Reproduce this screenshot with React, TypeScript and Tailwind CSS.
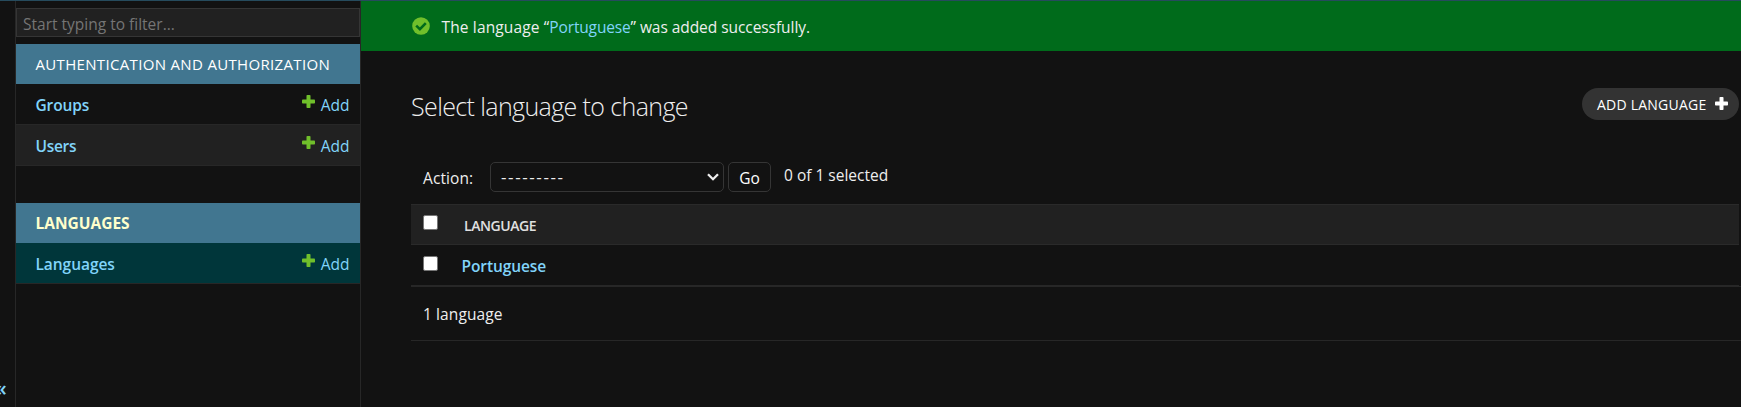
import type { ReactNode } from "react";

function PlusIcon({ className }: { className: string }) {
  return (
    <svg viewBox="0 0 13 13" className={className} fill="currentColor" aria-hidden="true">
      <rect x="4.5" y="0" width="4" height="13" rx="0.8" />
      <rect x="0" y="4.5" width="13" height="4" rx="0.8" />
    </svg>
  );
}

function CheckIcon() {
  return (
    <svg viewBox="0 0 18 18" className="h-[18px] w-[18px] shrink-0" aria-hidden="true">
      <circle cx="9" cy="9" r="8.8" fill="#70bf2b" />
      <path d="M4.2 8.6 L7.9 12.1 L13.8 6.1" fill="none" stroke="#006b1b" strokeWidth="2.6" />
    </svg>
  );
}

function ModelRow({ name, tracking, className }: { name: string; tracking: string; className: string }) {
  return (
    <li className={`flex h-[41px] items-center border-b border-[#272727] pl-[19.5px] pr-[10.5px] pt-[2px] text-[#81d4fa] ${className}`}>
      <a className={`font-semibold ${tracking}`}>{name}</a>
      <a className="ml-auto flex items-center">
        <PlusIcon className="mb-[7px] mr-[6px] h-[13px] w-[13px] text-[#70bf2b]" />
        Add
      </a>
    </li>
  );
}

function Caption({ children, className }: { children: ReactNode; className: string }) {
  return (
    <h2 className={`flex h-10 items-center whitespace-nowrap bg-[#417690] pl-[19.5px] uppercase ${className}`}>{children}</h2>
  );
}

function Checkbox() {
  return <span className="h-[15px] w-[15px] shrink-0 rounded-[2px] border border-[#767676] bg-white" />;
}

export default function App() {
  return (
    <div className="h-[407px] w-[1741px] overflow-hidden border-t border-[#264b5d] bg-[#121212] font-['Open_Sans',sans-serif] text-[15.5px] leading-5 text-[#eeeeee]">
      <div className="flex h-full">
        <div className="flex w-[15px] flex-col justify-end overflow-hidden pb-[7px]">
          <span className="-ml-[5px] text-[21px] font-semibold leading-6 text-[#81d4fa]">«</span>
        </div>

        <nav className="w-[346px] shrink-0 border-x border-[#272727] pt-[7px]">
          <div className="h-[29px] border border-[#353535] bg-[#212121] pl-[6px] pt-[5px] text-[#757575]">
            Start typing to filter…
          </div>
          <section className="mt-[7px]">
            <Caption className="text-[15px] tracking-[0.33px] text-white">Authentication and Authorization</Caption>
            <ul>
              <ModelRow name="Groups" tracking="tracking-[-0.15px]" className="" />
              <ModelRow name="Users" tracking="tracking-[-0.3px]" className="bg-[#212121]" />
            </ul>
          </section>
          <section className="mt-[37px]">
            <Caption className="font-bold text-[#ffffcc]">Languages</Caption>
            <ul>
              <ModelRow name="Languages" tracking="tracking-[-0.05px]" className="bg-[#00363a]" />
            </ul>
          </section>
        </nav>

        <main className="min-w-0 flex-1">
          <div className="flex h-[50px] items-center bg-[#006b1b] pl-[51px]">
            <CheckIcon />
            <p className="ml-[11.5px] whitespace-nowrap pt-[2px]">
              <span className="tracking-[0.14px]">The language “</span>
              <a className="tracking-[-0.15px] text-[#81d4fa]">Portuguese</a>
              <span className="tracking-[-0.06px]">” was added successfully.</span>
            </p>
          </div>

          <div className="pl-[50px]">
            <div className="flex items-start pr-[2px] pt-[37px]">
              <h1 className="pt-[3px] text-[25px] font-light leading-[30px] tracking-[-0.61px]">Select language to change</h1>
              <a className="ml-auto flex h-8 w-[157px] items-center rounded-full bg-[#333333] pl-[15px] text-[14px] tracking-[0.23px] text-white">
                <span className="pt-[1px]">ADD LANGUAGE</span>
                <PlusIcon className="mb-[1px] ml-[9px] h-[13px] w-[13px]" />
              </a>
            </div>

            <div className="mt-[41px] flex h-[30px] pl-3">
              <span className="w-[67px] pt-[6px] tracking-[0.1px]">Action:</span>
              <div className="flex w-[234px] items-center rounded-[5px] border border-[#353535] pl-[10px] pr-[4px]">
                <span className="text-[17px] tracking-[1.6px]">---------</span>
                <svg viewBox="0 0 12 8" className="ml-auto h-2 w-3" fill="none" stroke="currentColor" strokeWidth="2.3" aria-hidden="true">
                  <path d="M1 1.2 L6 6.2 L11 1.2" />
                </svg>
              </div>
              <button className="ml-1 flex w-[43px] justify-center rounded-[5px] border border-[#353535] pt-[5px] text-white">Go</button>
              <span className="ml-[13px] pt-[3px]">0 of 1 selected</span>
            </div>

            <div className="mr-[2px] mt-3">
              <div className="flex h-[41px] border-y border-[#2a2a2a] bg-[#212121] pl-3 pt-[10px]">
                <Checkbox />
                <span className="ml-[26px] pt-[1px] text-[14px] font-semibold tracking-[-0.45px] text-[#e0e0e0]">LANGUAGE</span>
              </div>
              <div className="flex h-[41px] border-b border-[#272727] pl-3 pt-[11px]">
                <Checkbox />
                <a className="ml-[23.5px] font-semibold tracking-[-0.1px] text-[#81d4fa]">Portuguese</a>
              </div>
            </div>
            <p className="h-[55px] border-y border-[#272727] pl-3 pt-[17px] tracking-[0.1px]">1 language</p>
          </div>
        </main>
      </div>
    </div>
  );
}
